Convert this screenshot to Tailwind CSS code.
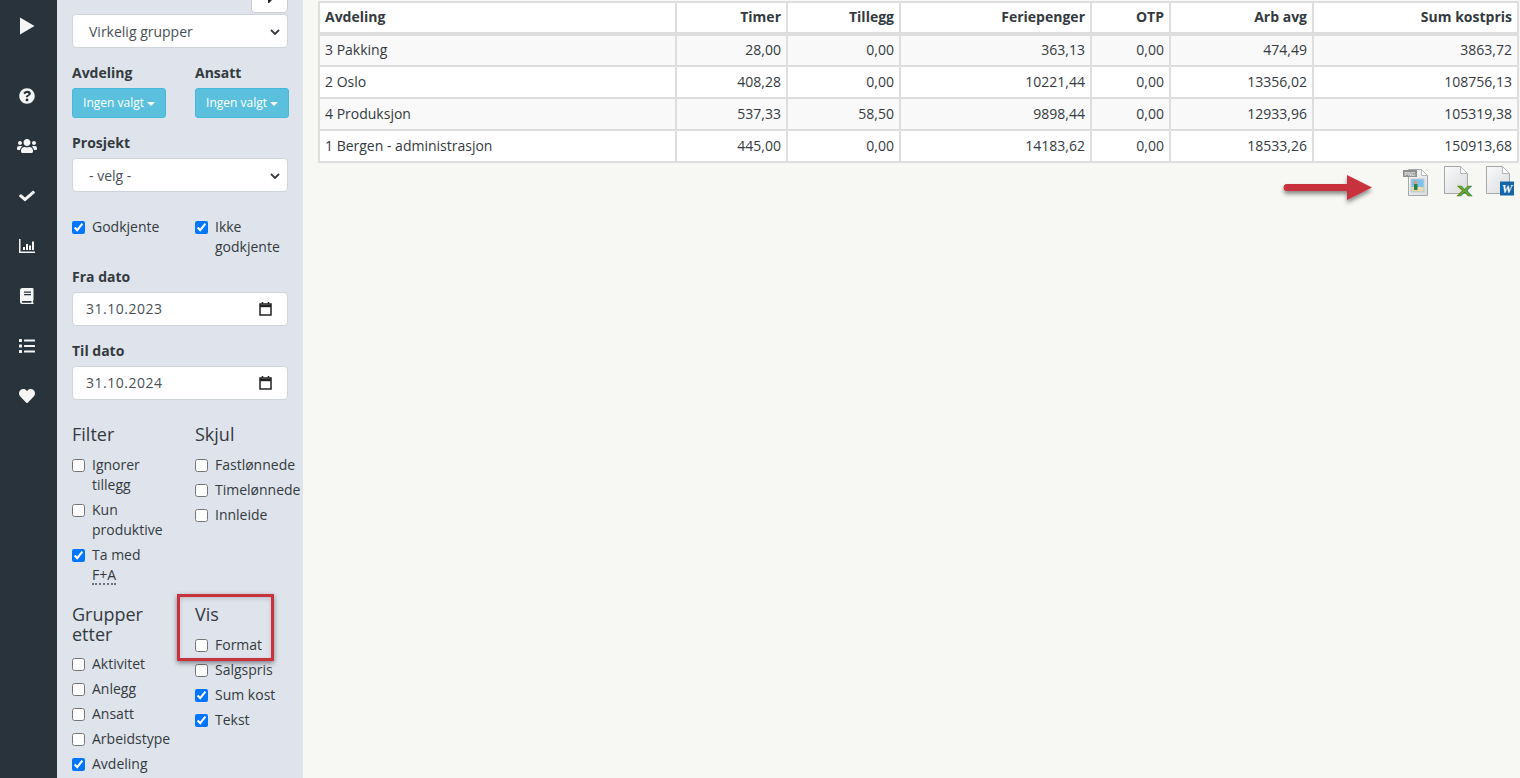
<!DOCTYPE html>
<html lang="no">
<head>
  <meta charset="UTF-8">
  <title>Rapport</title>
  <script src="https://cdn.jsdelivr.net/npm/@tailwindcss/browser@4"></script>
</head>
<body class="bg-[#f7f8f4] text-[#343a40] text-[14px] leading-[20px] font-['Open_Sans',sans-serif] overflow-hidden">
  <div class="flex h-[778px] overflow-hidden">

    <!-- Icon rail -->
    <nav class="w-[57px] shrink-0 bg-[#29333c] pr-[3px] text-[#f4f5f4]">
      <div class="h-[52px] mb-[19px] flex items-center justify-center">
        <svg class="w-[15px] h-[18px]" viewBox="0 0 15 18" fill="currentColor"><path d="M0 0.5 L14.5 9 L0 17.5 Z"/></svg>
      </div>
      <div class="h-[50px] flex items-center justify-center">
        <svg class="w-[16px] h-[16px]" viewBox="0 0 512 512" fill="currentColor"><path d="M504 256c0 137-111 248-248 248S8 393 8 256 119 8 256 8s248 111 248 248zM262.700 90c-54.500 0-89.300 23-116.500 63.800-3.500 5.300-2.400 12.400 2.700 16.300l34.700 26.300c5.200 3.900 12.600 3 16.700-2.100 17.900-22.700 30.100-35.800 57.300-35.800 20.400 0 45.700 13.100 45.700 32.900 0 15-12.400 22.700-32.600 34-23.600 13.200-54.800 29.700-54.800 70.900V280c0 6.600 5.400 12 12 12h56c6.600 0 12-5.400 12-12v-1.300c0-28.600 83.500-29.700 83.500-107C380 113.400 319.500 90 262.700 90zM256 339c-24.800 0-45 20.200-45 45s20.200 45 45 45 45-20.200 45-45-20.200-45-45-45z"/></svg>
      </div>
      <div class="h-[50px] flex items-center justify-center">
        <svg class="w-[20px] h-[16px]" viewBox="0 0 640 512" fill="currentColor"><path d="M96 224c35.300 0 64-28.700 64-64s-28.700-64-64-64-64 28.700-64 64 28.700 64 64 64zm448 0c35.300 0 64-28.700 64-64s-28.700-64-64-64-64 28.700-64 64 28.700 64 64 64zm32 32h-64c-17.600 0-33.500 7.100-45.100 18.600 40.300 22.100 68.900 62 75.100 109.400h66c17.700 0 32-14.300 32-32v-32c0-35.300-28.700-64-64-64zm-256 0c61.900 0 112-50.100 112-112S381.900 32 320 32 208 82.100 208 144s50.100 112 112 112zm76.800 32h-8.300c-20.800 10-43.900 16-68.500 16s-47.600-6-68.500-16h-8.300C179.600 288 128 339.600 128 403.200V432c0 26.500 21.500 48 48 48h288c26.500 0 48-21.500 48-48v-28.800c0-63.600-51.600-115.200-115.200-115.200zm-223.700-13.400C161.500 263.100 145.600 256 128 256H64c-35.300 0-64 28.700-64 64v32c0 17.700 14.300 32 32 32h65.900c6.300-47.400 34.900-87.300 75.200-109.400z"/></svg>
      </div>
      <div class="h-[50px] flex items-center justify-center">
        <svg class="w-[16px] h-[14px]" viewBox="0 0 512 512" preserveAspectRatio="none" fill="currentColor"><path d="M173.900 439.400l-166.400-166.400c-10-10-10-26.200 0-36.200l36.200-36.200c10-10 26.200-10 36.200 0L192 312.700 432.100 72.600c10-10 26.200-10 36.200 0l36.200 36.200c10 10 10 26.200 0 36.200l-294.400 294.400c-10 10-26.200 10-36.200 0z"/></svg>
      </div>
      <div class="h-[50px] flex items-center justify-center">
        <svg class="w-[16px] h-[14px]" viewBox="0 0 16 14" fill="currentColor"><path d="M0 0h1.500v12.500H16V14H0z"/><rect x="4" y="8" width="2" height="3"/><rect x="7" y="5" width="2" height="6"/><rect x="10" y="6.500" width="2" height="4.500"/><rect x="13" y="2.500" width="2" height="8.500"/></svg>
      </div>
      <div class="h-[50px] flex items-center justify-center">
        <svg class="w-[14px] h-[16px]" viewBox="0 0 14 16" fill="currentColor"><path fill-rule="evenodd" d="M2.500 0H12.500a1 1 0 0 1 1 1v11a1 1 0 0 1-.6.9V14.500h.6V16H2.500A2.500 2.500 0 0 1 0 13.500V2.500A2.500 2.500 0 0 1 2.500 0zM4 3.500V4.700H11V3.500zM4 6V7.200H11V6zM2.400 13a1 1 0 0 0 0 1.700H11.500V13z"/></svg>
      </div>
      <div class="h-[50px] flex items-center justify-center">
        <svg class="w-[16px] h-[14px]" viewBox="0 0 16 14" fill="currentColor"><rect y="0" width="3" height="3" rx=".5"/><rect y="5.500" width="3" height="3" rx=".5"/><rect y="11" width="3" height="3" rx=".5"/><rect x="5" y=".5" width="11" height="2" rx=".5"/><rect x="5" y="6" width="11" height="2" rx=".5"/><rect x="5" y="11.500" width="11" height="2" rx=".5"/></svg>
      </div>
      <div class="h-[50px] flex items-center justify-center">
        <svg class="w-[16px] h-[14px]" viewBox="0 0 512 448" preserveAspectRatio="none" fill="currentColor"><path d="M462.300 30.600C407.500-16.100 326 -7.700 275.700 44.200L256 64.500l-19.700-20.300C186.100-7.700 104.500-16.100 49.700 30.600c-62.800 53.600-66.100 149.800-9.900 207.900l193.500 199.800c12.500 12.900 32.800 12.900 45.300 0l193.500-199.800c56.300-58.100 53-154.300-9.800-207.900z"/></svg>
      </div>
    </nav>

    <!-- Filter panel -->
    <aside class="relative w-[246px] shrink-0 bg-[#dfe4ec] pl-[15px] overflow-hidden">
      <div class="flex justify-end w-[216px] mt-[-21px] mb-[1px]">
        <button class="w-[37px] h-[34px] bg-white border border-[#ccc] rounded-[4px] flex items-end justify-center pb-[9px]">
          <svg class="w-[7px] h-[3px]" viewBox="0 0 7 3" fill="#222"><path d="M2 0H6L3 3H2z"/></svg>
        </button>
      </div>
      <div class="relative w-[216px]">
        <select class="block appearance-none w-full h-[34px] bg-white border border-[#ced4da] rounded-[4px] pl-[16px] pt-[2px] text-[#495057]"><option>Virkelig grupper</option></select>
        <svg class="absolute right-[8px] top-[15px] w-[10px] h-[6px]" viewBox="0 0 10 6" fill="none" stroke="#343a40" stroke-width="1.800"><path d="M1 1l4 4 4-4"/></svg>
      </div>

      <div class="grid grid-cols-[123px_123px] mt-[15px]">
        <div>
          <div class="font-bold">Avdeling</div>
          <button class="mt-[5px] w-[94px] h-[30px] bg-[#5bc0de] border border-[#46b8da] rounded-[3px] text-white text-[12px] flex items-center justify-center gap-[3px]">Ingen valgt <span class="mt-[1px] border-x-[4px] border-x-transparent border-t-[4px] border-t-white"></span></button>
        </div>
        <div>
          <div class="font-bold">Ansatt</div>
          <button class="mt-[5px] w-[94px] h-[30px] bg-[#5bc0de] border border-[#46b8da] rounded-[3px] text-white text-[12px] flex items-center justify-center gap-[3px]">Ingen valgt <span class="mt-[1px] border-x-[4px] border-x-transparent border-t-[4px] border-t-white"></span></button>
        </div>
      </div>

      <div class="font-bold mt-[15px]">Prosjekt</div>
      <div class="relative mt-[5px] w-[216px]">
        <select class="block appearance-none w-full h-[34px] bg-white border border-[#ced4da] rounded-[4px] pl-[16px] pt-[2px] text-[#495057]"><option>- velg -</option></select>
        <svg class="absolute right-[8px] top-[15px] w-[10px] h-[6px]" viewBox="0 0 10 6" fill="none" stroke="#343a40" stroke-width="1.800"><path d="M1 1l4 4 4-4"/></svg>
      </div>

      <div class="grid grid-cols-[123px_123px] mt-[25px]">
        <label class="flex gap-[7px] w-[100px]"><input type="checkbox" checked class="w-[13px] h-[13px] mt-[4px] shrink-0">Godkjente</label>
        <label class="flex gap-[7px] w-[100px]"><input type="checkbox" checked class="w-[13px] h-[13px] mt-[4px] shrink-0"><span>Ikke godkjente</span></label>
      </div>

      <div class="font-bold mt-[10px]">Fra dato</div>
      <div class="mt-[5px] w-[216px] h-[34px] bg-white border border-[#ced4da] rounded-[4px] pl-[13px] pr-[15px] flex items-center justify-between text-[#495057] tracking-[0.5px]">
        31.10.2023
        <svg class="w-[13px] h-[14px]" viewBox="0 0 13 14" fill="none" stroke="#222"><rect x="1" y="2" width="11" height="11" stroke-width="1.500"/><path d="M1 4h11" stroke-width="2.400"/><path d="M3.500 0v2M9.500 0v2" stroke-width="1.500"/></svg>
      </div>

      <div class="font-bold mt-[15px]">Til dato</div>
      <div class="mt-[5px] w-[216px] h-[34px] bg-white border border-[#ced4da] rounded-[4px] pl-[13px] pr-[15px] flex items-center justify-between text-[#495057] tracking-[0.5px]">
        31.10.2024
        <svg class="w-[13px] h-[14px]" viewBox="0 0 13 14" fill="none" stroke="#222"><rect x="1" y="2" width="11" height="11" stroke-width="1.500"/><path d="M1 4h11" stroke-width="2.400"/><path d="M3.500 0v2M9.500 0v2" stroke-width="1.500"/></svg>
      </div>

      <div class="grid grid-cols-[123px_123px] mt-[24px]">
        <div>
          <h4 class="text-[18px] leading-[20px]">Filter</h4>
          <div class="mt-[11px] flex flex-col gap-[5px] w-[100px]">
            <label class="flex gap-[7px]"><input type="checkbox" class="w-[13px] h-[13px] mt-[4px] shrink-0"><span>Ignorer tillegg</span></label>
            <label class="flex gap-[7px]"><input type="checkbox" class="w-[13px] h-[13px] mt-[4px] shrink-0"><span>Kun produktive</span></label>
            <label class="flex gap-[7px]"><input type="checkbox" checked class="w-[13px] h-[13px] mt-[4px] shrink-0"><span>Ta med <abbr class="block w-fit no-underline pt-[2px] border-b-2 border-dotted border-[#6b7078] leading-[16px]">F+A</abbr></span></label>
          </div>
        </div>
        <div>
          <h4 class="text-[18px] leading-[20px]">Skjul</h4>
          <div class="mt-[11px] flex flex-col gap-[5px]">
            <label class="flex gap-[7px]"><input type="checkbox" class="w-[13px] h-[13px] mt-[4px] shrink-0">Fastlønnede</label>
            <label class="flex gap-[7px]"><input type="checkbox" class="w-[13px] h-[13px] mt-[4px] shrink-0">Timelønnede</label>
            <label class="flex gap-[7px]"><input type="checkbox" class="w-[13px] h-[13px] mt-[4px] shrink-0">Innleide</label>
          </div>
        </div>
      </div>

      <div class="grid grid-cols-[123px_123px] mt-[19px]">
        <div>
          <h4 class="text-[18px] leading-[20px]">Grupper<br>etter</h4>
          <div class="mt-[10px] flex flex-col gap-[5px]">
            <label class="flex gap-[7px]"><input type="checkbox" class="w-[13px] h-[13px] mt-[4px] shrink-0">Aktivitet</label>
            <label class="flex gap-[7px]"><input type="checkbox" class="w-[13px] h-[13px] mt-[4px] shrink-0">Anlegg</label>
            <label class="flex gap-[7px]"><input type="checkbox" class="w-[13px] h-[13px] mt-[4px] shrink-0">Ansatt</label>
            <label class="flex gap-[7px]"><input type="checkbox" class="w-[13px] h-[13px] mt-[4px] shrink-0">Arbeidstype</label>
            <label class="flex gap-[7px]"><input type="checkbox" checked class="w-[13px] h-[13px] mt-[4px] shrink-0">Avdeling</label>
          </div>
        </div>
        <div>
          <h4 class="text-[18px] leading-[20px]">Vis</h4>
          <div class="mt-[11px] flex flex-col gap-[5px]">
            <label class="flex gap-[7px]"><input type="checkbox" class="w-[13px] h-[13px] mt-[4px] shrink-0">Format</label>
            <label class="flex gap-[7px]"><input type="checkbox" class="w-[13px] h-[13px] mt-[4px] shrink-0">Salgspris</label>
            <label class="flex gap-[7px]"><input type="checkbox" checked class="w-[13px] h-[13px] mt-[4px] shrink-0">Sum kost</label>
            <label class="flex gap-[7px]"><input type="checkbox" checked class="w-[13px] h-[13px] mt-[4px] shrink-0">Tekst</label>
          </div>
        </div>
      </div>

      <!-- Annotation box drawn over the panel -->
      <div class="absolute left-[120px] top-[594px] w-[97px] h-[67px] border-[3px] border-[#c8323c] shadow-[0_2px_5px_rgba(0,0,0,0.45),inset_0_2px_4px_rgba(0,0,0,0.15)]"></div>
    </aside>

    <!-- Report -->
    <main class="flex-1 min-w-0 pl-[15px] pr-[3px]">
      <table class="w-[1199px] mt-px table-fixed border-collapse text-[#343a40]">
        <colgroup>
          <col class="w-[357px]"><col class="w-[111px]"><col class="w-[113px]"><col class="w-[191px]"><col class="w-[79px]"><col class="w-[143px]"><col class="w-[205px]">
        </colgroup>
        <thead class="bg-white font-bold">
          <tr class="h-[32px]">
            <th class="border-2 border-b-[4px] border-[#dedede] px-[5px] pb-[2px] text-left">Avdeling</th>
            <th class="border-2 border-b-[4px] border-[#dedede] px-[5px] pb-[2px] text-right">Timer</th>
            <th class="border-2 border-b-[4px] border-[#dedede] px-[5px] pb-[2px] text-right">Tillegg</th>
            <th class="border-2 border-b-[4px] border-[#dedede] px-[5px] pb-[2px] text-right">Feriepenger</th>
            <th class="border-2 border-b-[4px] border-[#dedede] px-[5px] pb-[2px] text-right">OTP</th>
            <th class="border-2 border-b-[4px] border-[#dedede] px-[5px] pb-[2px] text-right">Arb avg</th>
            <th class="border-2 border-b-[4px] border-[#dedede] px-[5px] pb-[2px] text-right">Sum kostpris</th>
          </tr>
        </thead>
        <tbody>
          <tr class="h-[32px] bg-[#f9f9f9]">
            <td class="border-2 border-[#dedede] px-[5px] pb-[2px]">3 Pakking</td>
            <td class="border-2 border-[#dedede] px-[5px] pb-[2px] text-right">28,00</td>
            <td class="border-2 border-[#dedede] px-[5px] pb-[2px] text-right">0,00</td>
            <td class="border-2 border-[#dedede] px-[5px] pb-[2px] text-right">363,13</td>
            <td class="border-2 border-[#dedede] px-[5px] pb-[2px] text-right">0,00</td>
            <td class="border-2 border-[#dedede] px-[5px] pb-[2px] text-right">474,49</td>
            <td class="border-2 border-[#dedede] px-[5px] pb-[2px] text-right">3863,72</td>
          </tr>
          <tr class="h-[32px] bg-white">
            <td class="border-2 border-[#dedede] px-[5px]">2 Oslo</td>
            <td class="border-2 border-[#dedede] px-[5px] text-right">408,28</td>
            <td class="border-2 border-[#dedede] px-[5px] text-right">0,00</td>
            <td class="border-2 border-[#dedede] px-[5px] text-right">10221,44</td>
            <td class="border-2 border-[#dedede] px-[5px] text-right">0,00</td>
            <td class="border-2 border-[#dedede] px-[5px] text-right">13356,02</td>
            <td class="border-2 border-[#dedede] px-[5px] text-right">108756,13</td>
          </tr>
          <tr class="h-[32px] bg-[#f9f9f9]">
            <td class="border-2 border-[#dedede] px-[5px]">4 Produksjon</td>
            <td class="border-2 border-[#dedede] px-[5px] text-right">537,33</td>
            <td class="border-2 border-[#dedede] px-[5px] text-right">58,50</td>
            <td class="border-2 border-[#dedede] px-[5px] text-right">9898,44</td>
            <td class="border-2 border-[#dedede] px-[5px] text-right">0,00</td>
            <td class="border-2 border-[#dedede] px-[5px] text-right">12933,96</td>
            <td class="border-2 border-[#dedede] px-[5px] text-right">105319,38</td>
          </tr>
          <tr class="h-[32px] bg-white">
            <td class="border-2 border-[#dedede] px-[5px]">1 Bergen - administrasjon</td>
            <td class="border-2 border-[#dedede] px-[5px] text-right">445,00</td>
            <td class="border-2 border-[#dedede] px-[5px] text-right">0,00</td>
            <td class="border-2 border-[#dedede] px-[5px] text-right">14183,62</td>
            <td class="border-2 border-[#dedede] px-[5px] text-right">0,00</td>
            <td class="border-2 border-[#dedede] px-[5px] text-right">18533,26</td>
            <td class="border-2 border-[#dedede] px-[5px] text-right">150913,68</td>
          </tr>
        </tbody>
      </table>

      <!-- Export icons with arrow annotation -->
      <div class="relative flex justify-end items-start mt-[3px] pr-[3px]">
        <svg class="absolute left-[966px] top-[9px] overflow-visible" width="88" height="26" viewBox="0 0 88 26"><defs><filter id="arrowShadow" x="-20%" y="-40%" width="140%" height="200%"><feDropShadow dx="0" dy="3" stdDeviation="2" flood-color="#000" flood-opacity=".45"/></filter></defs><path filter="url(#arrowShadow)" fill="#c8323c" d="M3 9h60V0l25 12.500L63 25v-9H3a3.500 3.500 0 0 1 0-7z"/></svg>

        <!-- png -->
        <svg class="w-[25px] h-[29px] mt-[2px] mr-[16px]" viewBox="0 0 25 29">
          <defs>
            <linearGradient id="pageFill" x1="0" y1="0" x2="1" y2="1"><stop offset="0" stop-color="#fafafa"/><stop offset="1" stop-color="#d8dbde"/></linearGradient>
          </defs>
          <path d="M5.500 1.500h13l6 6v20h-19z" fill="url(#pageFill)" stroke="#a5a8aa"/>
          <path d="M18.500 1.500v6h6z" fill="#fff" stroke="#b5b8ba"/>
          <rect x="0" y="2" width="14" height="7" fill="#8e8e8e"/>
          <text x="7" y="7.500" text-anchor="middle" font-size="5" font-weight="700" fill="#e8e8e8" font-family="Liberation Sans, sans-serif">PNG</text>
          <rect x="8" y="11" width="13" height="13" fill="#7cc4ee" stroke="#c0c8cf"/>
          <rect x="8.500" y="19" width="12" height="4.500" fill="#eadcae"/>
          <circle cx="12.500" cy="14.500" r="1.800" fill="#d69a75"/>
          <rect x="11" y="16" width="3.500" height="6" fill="#2f7d46"/>
        </svg>
        <!-- excel -->
        <svg class="w-[28px] h-[30px] mr-[14px] overflow-visible" viewBox="0 0 28 30">
          <path d="M.500.500h16l7 7v20H.500z" fill="url(#pageFill)" stroke="#a5a8aa"/>
          <path d="M16.500.500v7h7z" fill="#fff" stroke="#b5b8ba"/>
          <text x="13" y="29.500" font-size="14" font-weight="700" textLength="15" lengthAdjust="spacingAndGlyphs" fill="#6aaf35" stroke="#3f7d1d" stroke-width=".5" font-family="Liberation Sans, sans-serif">X</text>
        </svg>
        <!-- word -->
        <svg class="w-[28px] h-[30px]" viewBox="0 0 28 30">
          <path d="M.500.500h16l7 7v20H.500z" fill="url(#pageFill)" stroke="#a5a8aa"/>
          <path d="M16.500.500v7h7z" fill="#fff" stroke="#b5b8ba"/>
          <rect x="14" y="15.500" width="14" height="14" fill="#1565ab"/>
          <text x="21" y="27" text-anchor="middle" font-size="12" font-weight="700" font-style="italic" fill="#fff" font-family="Liberation Serif, serif">W</text>
        </svg>
      </div>
    </main>
  </div>
</body>
</html>
